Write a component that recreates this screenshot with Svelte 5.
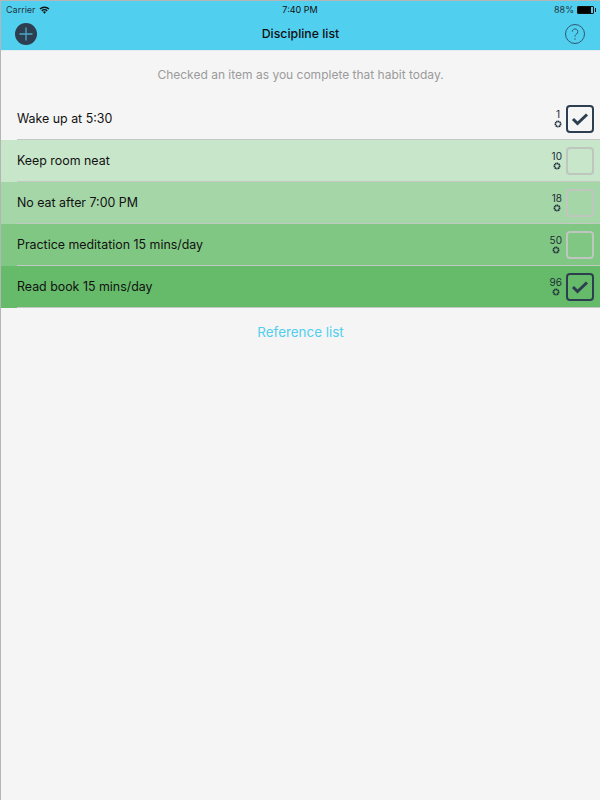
<script>
  const habits = [
    { name: "Wake up at 5:30", count: 1, done: true, bg: "#f5f5f5" },
    { name: "Keep room neat", count: 10, done: false, bg: "#c8e6c9" },
    { name: "No eat after 7:00 PM", count: 18, done: false, bg: "#a5d6a7" },
    { name: "Practice meditation 15 mins/day", count: 50, done: false, bg: "#81c784" },
    { name: "Read book 15 mins/day", count: 96, done: true, bg: "#66bb6a" }
  ];
</script>

<div class="screen">
  <header>
    <div class="status">
      <div class="left">
        <span>Carrier</span>
        <svg width="11" height="8" viewBox="0 0 11 8">
          <path d="M0.5 2.6a7 7 0 0 1 10 0l-1 1a5.6 5.6 0 0 0-8 0z" fill="#111" />
          <path d="M2.3 4.4a4.5 4.5 0 0 1 6.4 0l-1 1a3.1 3.1 0 0 0-4.4 0z" fill="#111" />
          <path d="M4 6.1a2 2 0 0 1 3 0L5.500 7.700z" fill="#111" />
        </svg>
      </div>
      <span class="time">7:40 PM</span>
      <div class="right">
        <span>88%</span>
        <div class="battery"><div class="level"></div></div>
      </div>
    </div>
    <div class="nav">
      <button class="add" aria-label="Add">
        <svg width="22" height="22" viewBox="0 0 22 22">
          <circle cx="11" cy="11" r="11" fill="#2c3e50" />
          <path d="M11 4.500v13M4.500 11h13" stroke="#4aa8c4" stroke-width="1.300" />
        </svg>
      </button>
      <h1>Discipline list</h1>
      <button class="help" aria-label="Help">
        <svg width="22" height="22" viewBox="0 0 22 22">
          <circle cx="11" cy="11" r="9.500" fill="none" stroke="#2c5a70" stroke-width="1" />
          <path d="M8.200 8.700a2.800 2.800 0 1 1 4.400 2.300c-1 .7-1.600 1.200-1.600 2.600" fill="none" stroke="#2c5a70" stroke-width="1" />
          <circle cx="11" cy="16" r=".7" fill="#2c5a70" />
        </svg>
      </button>
    </div>
  </header>

  <p class="hint">Checked an item as you complete that habit today.</p>

  <ul>
    {#each habits as habit}
      <li style="background: {habit.bg}">
        <span class="name">{habit.name}</span>
        <div class="streak">
          <span>{habit.count}</span>
          <svg width="8" height="8" viewBox="0 0 8 8">
            <circle cx="4" cy="4" r="2.600" fill="none" stroke="#1c2b38" stroke-width="1.700" stroke-dasharray="1.300 .4" />
          </svg>
        </div>
        <div class="box" class:done={habit.done}>
          {#if habit.done}
            <svg width="18" height="14" viewBox="0 0 18 14">
              <path d="M2 7l4.500 4.500L16 2.500" fill="none" stroke="#2c3e50" stroke-width="3" />
            </svg>
          {/if}
        </div>
      </li>
    {/each}
  </ul>

  <a class="reference" href="#top">Reference list</a>
</div>

<style>
  :global(body) {
    margin: 0;
    background: #f5f5f5;
  }
  .screen {
    width: 600px;
    height: 800px;
    overflow: hidden;
    background: #f5f5f5;
    font-family: Inter, "Liberation Sans", sans-serif;
    color: #111;
    border-left: 1px solid #b5b5b5;
    box-sizing: border-box;
  }
  header {
    height: 51px;
    box-sizing: border-box;
    background: #51cfef;
    border-top: 1px solid #b5b5b5;
    margin-left: -1px;
    border-bottom: 1px solid #e4eef2;
  }
  .status {
    display: grid;
    grid-template-columns: 1fr auto 1fr;
    align-items: center;
    height: 17px;
    padding: 0 6px 0 6px;
    font-size: 9px;
    color: #1f3640;
  }
  .left {
    display: flex;
    align-items: center;
    gap: 3px;
  }
  .time {
    color: #111;
  }
  .right {
    display: flex;
    align-items: center;
    justify-content: flex-end;
    gap: 3px;
  }
  .battery {
    width: 15px;
    height: 6px;
    border: 1px solid #111;
    border-radius: 1px;
    position: relative;
  }
  .battery::after {
    content: "";
    position: absolute;
    right: -3px;
    top: 1px;
    width: 1px;
    height: 4px;
    background: #111;
  }
  .level {
    width: 88%;
    height: 100%;
    background: #000;
  }
  .nav {
    display: flex;
    align-items: center;
    justify-content: space-between;
    height: 32px;
    padding: 0 14px 0 15px;
  }
  button {
    border: 0;
    padding: 0;
    background: none;
    width: 22px;
    height: 22px;
  }
  h1 {
    margin: 0 0 1px;
    font-size: 12.3px;
    font-weight: 500;
    color: #111;
  }
  .hint {
    margin: 0;
    height: 47px;
    line-height: 47px;
    text-align: center;
    font-size: 12px;
    color: #9b9b9b;
  }
  ul {
    list-style: none;
    margin: 0 0 0 -1px;
    padding: 0;
  }
  li {
    position: relative;
    display: flex;
    align-items: center;
    height: 42px;
    padding: 0 6px 0 17px;
    box-sizing: border-box;
  }
  li::after {
    content: "";
    position: absolute;
    left: 17px;
    right: 0;
    bottom: 0;
    height: 1px;
    background: #c4c8c4;
  }
  .name {
    flex: 1;
    font-size: 12.4px;
    padding-bottom: 2px;
  }
  .streak {
    display: flex;
    flex-direction: column;
    align-items: center;
    margin-right: 4px;
    padding-bottom: 1px;
    font-size: 10px;
    line-height: 11px;
    color: #1c2b38;
  }
  .streak svg {
    display: block;
  }
  .box {
    width: 28px;
    height: 28px;
    box-sizing: border-box;
    border: 2px solid #bfc5bf;
    border-radius: 4px;
    display: flex;
    align-items: center;
    justify-content: center;
  }
  .box.done {
    border-color: #2c3e50;
  }
  .reference {
    display: block;
    margin-top: 16px;
    text-align: center;
    font-size: 13.4px;
    line-height: 17px;
    color: #51cfef;
    text-decoration: none;
  }
</style>
